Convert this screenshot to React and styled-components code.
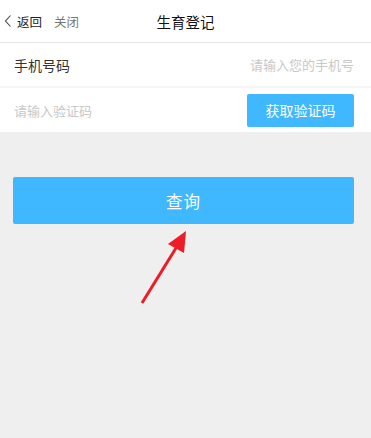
import React from 'react'
import styled, { createGlobalStyle } from 'styled-components';

const Global = createGlobalStyle`
html, body {
    margin: 0;
    padding: 0;
    background: #efefef;
    font-family: "Noto Sans CJK SC", "Noto Sans", sans-serif;
}
input::placeholder {
    color: #c8c8c8;
}
`

const Page = styled.div`
width: 371px;
height: 438px;
background: #efefef;
position: relative;
overflow: hidden;
`

const Header = styled.header`
height: 42px;
background: #fff;
border-bottom: 1px solid #e6e6e6;
display: flex;
align-items: center;
position: relative;
`

const NavLeft = styled.div`
display: flex;
align-items: center;
padding-left: 3px;
gap: 12px;
`

const NavLink = styled.span`
display: flex;
align-items: center;
gap: 3px;
font-size: 12.5px;
color: ${props => props.muted ? '#777' : '#222'};
`

const Title = styled.h1`
position: absolute;
left: 0;
right: 0;
margin: 0;
text-align: center;
font-size: 14.5px;
font-weight: 400;
color: #111;
pointer-events: none;
`

const Form = styled.div`
background: #fff;
display: flex;
flex-direction: column;
`

const Row = styled.div`
height: 43px;
display: flex;
align-items: center;
justify-content: space-between;
padding: 0 17px 0 14px;
& + & {
    height: 44px;
    border-top: 2px solid #f5f5f5;
}
`

const Label = styled.label`
font-size: 14px;
color: #333;
`

const Field = styled.input`
border: none;
outline: none;
background: transparent;
font-family: inherit;
font-size: 13px;
color: #333;
padding: 0;
text-align: ${props => props.right ? 'right' : 'left'};
width: ${props => props.right ? '160px' : '180px'};
`

const CodeButton = styled.button`
width: 107px;
height: 33px;
border: none;
border-radius: 2px;
background: #3fb8ff;
color: #fff;
font-family: inherit;
font-size: 14px;
padding: 0;
`

const Actions = styled.div`
padding: 45px 17px 0 13px;
`

const QueryButton = styled.button`
width: 100%;
height: 47px;
border: none;
border-radius: 2px;
background: #3fb8ff;
color: #fff;
font-family: inherit;
font-size: 16.5px;
letter-spacing: 1px;
padding: 0;
`

const Arrow = styled.svg`
position: absolute;
left: 0;
top: 0;
pointer-events: none;
`

const App = () => {
    return (
        <Page>
            <Global />
            <Header>
                <NavLeft>
                    <NavLink>
                        <svg width="11" height="14" viewBox="0 0 11 14">
                            <path d="M7.5 1.5 L2.5 7 L7.5 12.5" fill="none" stroke="#444" strokeWidth="1.1" />
                        </svg>
                        返回
                    </NavLink>
                    <NavLink muted>关闭</NavLink>
                </NavLeft>
                <Title>生育登记</Title>
            </Header>
            <Form>
                <Row>
                    <Label>手机号码</Label>
                    <Field right placeholder="请输入您的手机号" />
                </Row>
                <Row>
                    <Field placeholder="请输入验证码" />
                    <CodeButton>获取验证码</CodeButton>
                </Row>
            </Form>
            <Actions>
                <QueryButton>查询</QueryButton>
            </Actions>
            <Arrow width="371" height="438">
                <line x1="142" y1="303" x2="176" y2="248" stroke="#ee1c25" strokeWidth="3" />
                <polygon points="186,231 168,244 184,253" fill="#ee1c25" />
            </Arrow>
        </Page>
    );
};

export default App
